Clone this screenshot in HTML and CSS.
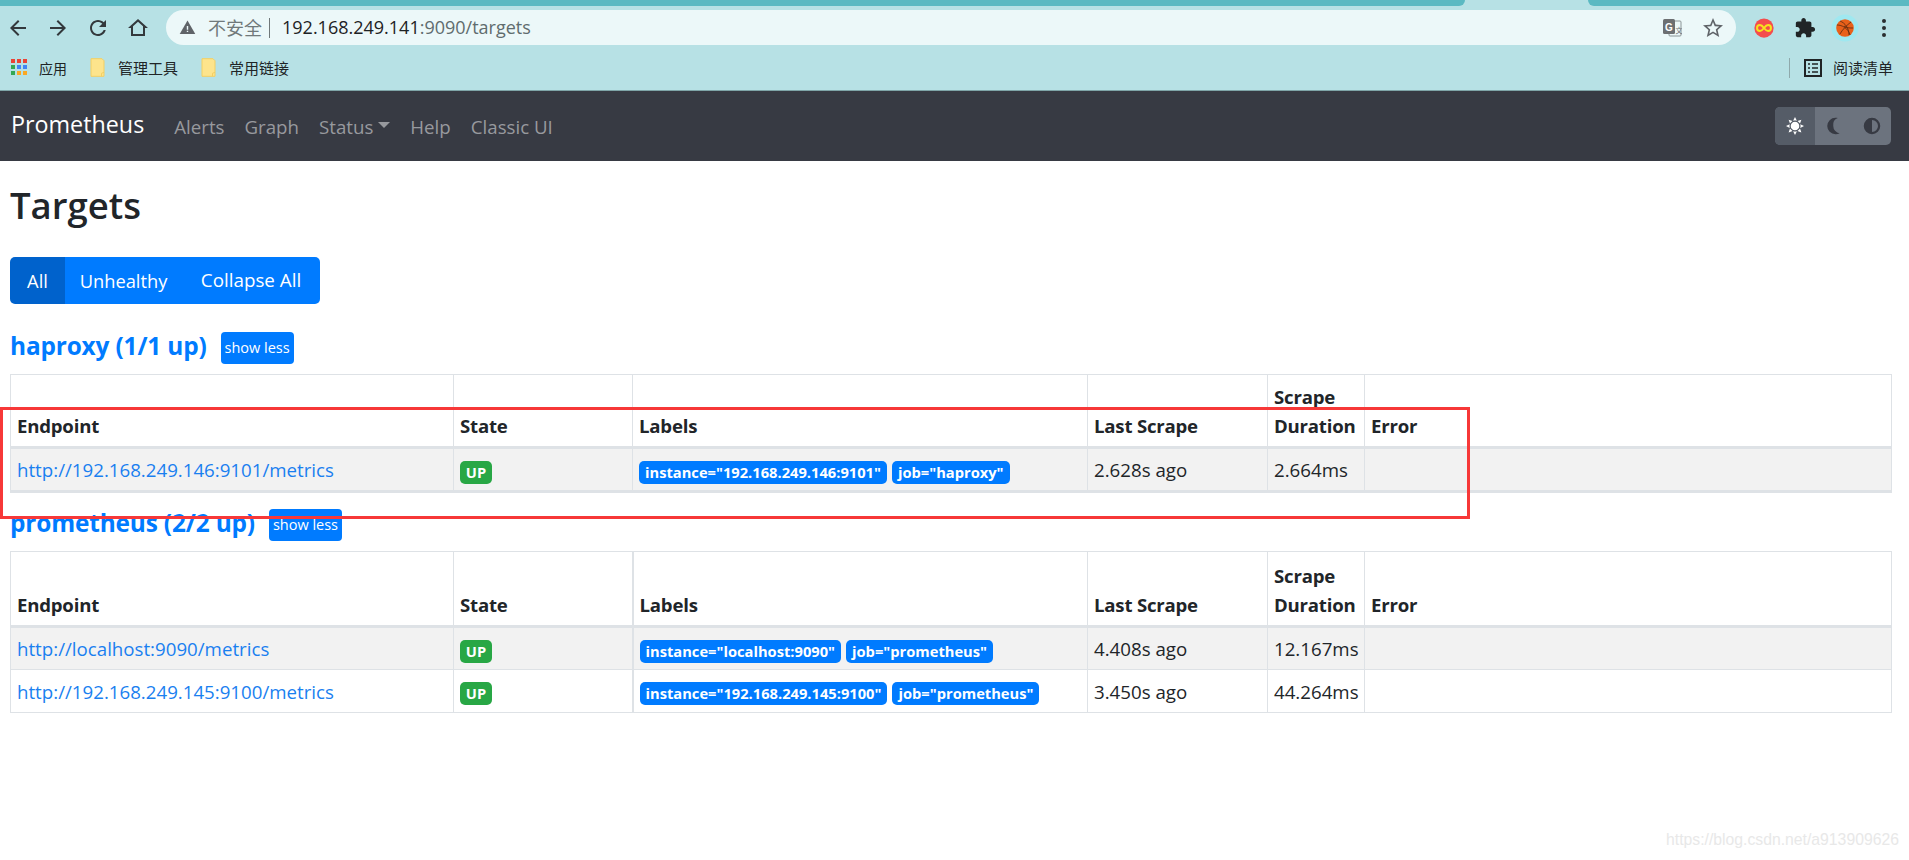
FILE: index.html
```html
<!DOCTYPE html>
<html lang="zh">
<head>
<meta charset="utf-8">
<title>Prometheus Time Series Collection and Processing Server</title>
<link rel="stylesheet" href="styles.css">
</head>
<body>
<header class="chrome">
  <div class="tabstrip"><div class="strip strip-left"></div><div class="strip strip-right"></div></div>
  <div class="toolbar">
    <div class="navicons">
      <svg class="ico" viewBox="0 0 24 24"><path d="M20 11H7.830l5.590-5.590L12 4l-8 8 8 8 1.410-1.410L7.830 13H20v-2z"/></svg>
      <svg class="ico" viewBox="0 0 24 24"><path d="M12 4l-1.410 1.410L16.170 11H4v2h12.170l-5.580 5.590L12 20l8-8z"/></svg>
      <svg class="ico" viewBox="0 0 24 24"><path d="M17.650 6.350C16.200 4.900 14.210 4 12 4c-4.420 0-7.990 3.580-7.990 8s3.570 8 7.990 8c3.730 0 6.840-2.550 7.730-6h-2.080c-.82 2.330-3.040 4-5.650 4-3.310 0-6-2.690-6-6s2.690-6 6-6c1.660 0 3.140.69 4.220 1.780L13 11h7V4l-2.350 2.350z"/></svg>
      <svg class="ico" viewBox="0 0 24 24"><path d="M12 5.690l5 4.500V18H7v-7.810l5-4.500M12 3L2 12h3v8h14v-8h3L12 3z"/></svg>
    </div>
    <div class="omnibox">
      <svg class="warn" viewBox="0 0 24 24"><path d="M1 21h22L12 2 1 21z"/><path class="warn-mark" d="M11 10h2v5h-2zM11 16.500h2v2h-2z"/></svg>
      <span class="insecure">不安全</span>
      <span class="sep"></span>
      <span class="url"><span class="host">192.168.249.141</span>:9090/targets</span>
      <span class="omni-right">
        <svg class="translate" viewBox="0 0 20 20"><rect class="tr-back" x="7" y="3" width="12" height="15" rx="1"/><rect class="tr-front" x="1" y="1" width="12" height="15" rx="1.500"/><text class="tr-g" x="7" y="12.500">G</text><text class="tr-x" x="13.500" y="15">文</text></svg>
        <svg class="star" viewBox="0 0 24 24"><path d="M22 9.240l-7.190-.62L12 2 9.190 8.630 2 9.240l5.460 4.730L5.820 21 12 17.270 18.180 21l-1.630-7.030L22 9.240zM12 15.400l-3.760 2.270 1-4.280-3.320-2.880 4.380-.38L12 6.100l1.710 4.040 4.380.38-3.320 2.880 1 4.280L12 15.400z"/></svg>
      </span>
    </div>
    <div class="extensions">
      <svg class="ext ext-first" viewBox="0 0 24 24"><circle class="ext-red" cx="12" cy="12" r="10.500"/><path class="ext-inf" d="M12 12c-1.800-2.400-3-3.200-4.400-3.200a3.200 3.200 0 0 0 0 6.400c1.400 0 2.600-.8 4.400-3.200s3-3.200 4.400-3.200a3.200 3.200 0 0 1 0 6.400c-1.400 0-2.600-.8-4.400-3.200z"/></svg>
      <svg class="ext" viewBox="0 0 24 24"><path d="M20.500 11H19V7c0-1.100-.9-2-2-2h-4V3.500C13 2.120 11.880 1 10.500 1S8 2.120 8 3.500V5H4c-1.100 0-1.990.9-1.990 2v3.800H3.500c1.490 0 2.700 1.210 2.700 2.700s-1.210 2.700-2.700 2.700H2V20c0 1.100.9 2 2 2h3.800v-1.500c0-1.490 1.210-2.700 2.700-2.700 1.490 0 2.700 1.210 2.700 2.700V22H17c1.100 0 2-.9 2-2v-4h1.500c1.380 0 2.500-1.120 2.500-2.500S21.880 11 20.500 11z"/></svg>
      <svg class="avatar" viewBox="0 0 28 28"><circle class="av-halo" cx="14" cy="14" r="13.500"/><circle class="av-ball" cx="14" cy="14" r="8.800"/><path class="av-line" d="M6 11c5 0 11 3 13 10M9 7c5 2 9 7 9 14M20 8c-4 3-9 8-11 12M22 14c-4 0-7 0-9-2"/></svg>
      <svg class="dots" viewBox="0 0 6 20"><circle cx="3" cy="3" r="2"/><circle cx="3" cy="10" r="2"/><circle cx="3" cy="17" r="2"/></svg>
    </div>
  </div>
  <div class="bookmarks">
    <div class="bm bm-apps">
      <svg class="apps" viewBox="0 0 17 17"><rect class="c-r" x="0" y="0" width="4" height="4"/><rect class="c-r" x="6" y="0" width="4" height="4"/><rect class="c-r" x="12" y="0" width="4" height="4"/><rect class="c-g" x="0" y="6" width="4" height="4"/><rect class="c-b" x="6" y="6" width="4" height="4"/><rect class="c-b" x="12" y="6" width="4" height="4"/><rect class="c-g" x="0" y="12" width="4" height="4"/><rect class="c-y" x="6" y="12" width="4" height="4"/><rect class="c-y" x="12" y="12" width="4" height="4"/></svg>
      <span>应用</span>
    </div>
    <div class="bm bm-folder">
      <svg class="folder" viewBox="0 0 15 19"><path class="f-body" d="M1 .7h11l2 2v15.600H1z"/><path class="f-fold" d="M11.500 18.300v-3l2.500-1"/></svg>
      <span>管理工具</span>
    </div>
    <div class="bm bm-folder">
      <svg class="folder" viewBox="0 0 15 19"><path class="f-body" d="M1 .7h11l2 2v15.600H1z"/><path class="f-fold" d="M11.500 18.300v-3l2.500-1"/></svg>
      <span>常用链接</span>
    </div>
    <div class="reading">
      <span class="reading-sep"></span>
      <svg class="reader" viewBox="0 0 18 18"><rect class="rd-box" x="1" y="1" width="16" height="16"/><path class="rd-lines" d="M4 5h2M8 5h6M4 9h2M8 9h6M4 13h2M8 13h6"/></svg>
      <span>阅读清单</span>
    </div>
  </div>
</header>

<nav class="navbar">
  <a class="brand">Prometheus</a>
  <ul class="navlinks">
    <li>Alerts</li>
    <li>Graph</li>
    <li class="dropdown">Status<span class="caret"></span></li>
    <li>Help</li>
    <li>Classic UI</li>
  </ul>
  <div class="theme">
    <span class="theme-btn active">
      <svg viewBox="0 0 24 24"><g class="sun-rays"><path d="M12 0l2.500 5h-5zM12 24l2.500-5h-5zM0 12l5-2.500v5zM24 12l-5-2.500v5zM3.500 3.500l5.300 1.800-3.500 3.500zM20.500 3.500l-1.800 5.300-3.500-3.500zM3.500 20.500l1.800-5.300 3.500 3.500zM20.500 20.500l-5.300-1.800 3.500-3.500z"/></g><circle class="sun-ring" cx="12" cy="12" r="6.500"/></svg>
    </span>
    <span class="theme-btn">
      <svg class="dim" viewBox="0 0 24 24"><path d="M14 23A11 11 0 1 1 14 1c1 0 2 .1 3 .4A10 10 0 0 0 11 12a10 10 0 0 0 8.500 9.800A11 11 0 0 1 14 23z"/></svg>
    </span>
    <span class="theme-btn">
      <svg class="dim" viewBox="0 0 24 24"><path d="M12 1a11 11 0 1 0 0 22 11 11 0 0 0 0-22zm0 19V4a8 8 0 0 1 0 16z"/></svg>
    </span>
  </div>
</nav>

<main class="page">
  <h1 class="title">Targets</h1>
  <div class="btn-group">
    <button class="btn active">All</button>
    <button class="btn">Unhealthy</button>
    <button class="btn">Collapse All</button>
  </div>

  <section class="pool pool-first">
    <div class="pool-head">
      <a class="pool-name">haproxy (1/1 up)</a>
      <button class="btn-sm">show less</button>
    </div>
    <table class="targets single">
      <colgroup><col class="c1"><col class="c2"><col class="c3"><col class="c4"><col class="c5"><col class="c6"></colgroup>
      <thead><tr><th>Endpoint</th><th>State</th><th>Labels</th><th>Last Scrape</th><th>Scrape Duration</th><th>Error</th></tr></thead>
      <tbody>
        <tr class="striped last-thick"><td><a class="link">http://192.168.249.146:9101/metrics</a></td><td><span class="badge up">UP</span></td><td class="labels"><span class="badge">instance="192.168.249.146:9101"</span><span class="badge">job="haproxy"</span></td><td>2.628s ago</td><td>2.664ms</td><td></td></tr>
      </tbody>
    </table>
  </section>

  <section class="pool">
    <div class="pool-head">
      <a class="pool-name">prometheus (2/2 up)</a>
      <button class="btn-sm">show less</button>
    </div>
    <table class="targets wide-rule">
      <colgroup><col class="c1"><col class="c2"><col class="c3"><col class="c4"><col class="c5"><col class="c6"></colgroup>
      <thead><tr><th>Endpoint</th><th>State</th><th>Labels</th><th>Last Scrape</th><th>Scrape Duration</th><th>Error</th></tr></thead>
      <tbody>
        <tr class="striped"><td><a class="link">http://localhost:9090/metrics</a></td><td><span class="badge up">UP</span></td><td class="labels"><span class="badge">instance="localhost:9090"</span><span class="badge">job="prometheus"</span></td><td>4.408s ago</td><td>12.167ms</td><td></td></tr>
        <tr><td><a class="link">http://192.168.249.145:9100/metrics</a></td><td><span class="badge up">UP</span></td><td class="labels"><span class="badge">instance="192.168.249.145:9100"</span><span class="badge">job="prometheus"</span></td><td>3.450s ago</td><td>44.264ms</td><td></td></tr>
      </tbody>
    </table>
  </section>
</main>

<div class="annotation"></div>
<div class="watermark">https://blog.csdn.net/a913909626</div>
</body>
</html>
```
FILE: styles.css
```css
* { box-sizing: border-box; }
html, body { margin: 0; height: 100%; }
body {
  position: relative;
  width: 1909px;
  height: 860px;
  overflow: hidden;
  background: #fff;
  color: #212529;
  font-family: "Open Sans", "Noto Sans CJK SC", sans-serif;
  font-size: 18.700px;
  line-height: 29px;
}

/* browser chrome */
.chrome { background: #b7e1e5; height: 91px; border-bottom: 1px solid #7fa5a8; }
.tabstrip { display: flex; height: 6px; }
.strip { background: #5bb9c2; height: 6px; }
.strip-left { width: 1465px; border-bottom-right-radius: 8px; }
.strip-right { margin-left: 123px; flex: 1; border-bottom-left-radius: 8px; }
.toolbar { display: flex; align-items: center; height: 35px; margin-top: 4px; }
.navicons { display: flex; align-items: center; gap: 16px; width: 166px; padding-left: 6px; }
.ico { width: 24px; height: 24px; fill: #33383c; display: block; }
.omnibox {
  width: 1570px; height: 35px; border-radius: 18px; background: #ecf8f9;
  display: flex; align-items: center; padding-left: 13px; color: #5f6c6e;
  font-size: 18px;
}
.warn { width: 17px; height: 17px; fill: #5f6368; margin-right: 12px; }
.warn-mark { fill: #ecf8f9; }
.insecure { font-family: "Noto Sans CJK SC", sans-serif; font-size: 18px; color: #70787a; }
.sep { width: 1px; height: 20px; background: #70787a; margin: 0 12px 0 7px; }
.host { color: #1d2224; }
.omni-right { margin-left: auto; display: flex; align-items: center; gap: 19px; padding-right: 11px; }
.translate { width: 20px; height: 20px; display: block; }
.tr-back { fill: #ecf8f9; stroke: #8a9496; stroke-width: 1; }
.tr-front { fill: #6c6f72; }
.tr-g { fill: #fff; font: bold 10px "Liberation Sans", sans-serif; text-anchor: middle; }
.tr-x { fill: #6c6f72; font: 7px "Noto Sans CJK SC", sans-serif; }
.star { width: 24px; height: 24px; fill: #5f6368; display: block; }
.extensions { display: flex; align-items: center; padding-left: 17px; }
.ext { width: 22px; height: 22px; fill: #202426; display: block; margin-right: 10px; }
.ext-first { margin-right: 19px; }
.ext-red { fill: #f44d4d; }
.ext-inf { fill: none; stroke: #f6e31c; stroke-width: 2.200; }
.avatar { width: 28px; height: 28px; display: block; margin-left: 5px; }
.av-halo { fill: #9fe8f0; }
.av-ball { fill: #e9601a; }
.av-line { fill: none; stroke: #5b2a10; stroke-width: .8; }
.dots { width: 6px; height: 20px; fill: #2a2e30; margin-left: 22px; display: block; }

.bookmarks {
  display: flex; align-items: center; height: 45px; padding-left: 11px; gap: 23px;
  font-family: "Noto Sans CJK SC", sans-serif; font-size: 15px; line-height: 20px; color: #202426;
}
.bm { display: flex; align-items: center; }
.apps { width: 17px; height: 17px; display: block; margin-right: 11px; }
.bm-apps span { font-size: 14px; }
.c-r { fill: #ea4335; }
.c-g { fill: #34a853; }
.c-b { fill: #4285f4; }
.c-y { fill: #f9a825; }
.folder { width: 15px; height: 19px; display: block; margin-right: 13px; }
.f-body { fill: #fde48c; stroke: #f3cf62; stroke-width: 1; }
.f-fold { fill: none; stroke: #f3cf62; stroke-width: 1; }
.reading { margin-left: auto; display: flex; align-items: center; padding-right: 16px; }
.reading-sep { width: 1px; height: 20px; background: #8fa9ac; margin-right: 14px; }
.reader { width: 18px; height: 18px; display: block; margin-right: 11px; }
.rd-box { fill: none; stroke: #202426; stroke-width: 2; }
.rd-lines { fill: none; stroke: #202426; stroke-width: 1.500; }

/* navbar */
.navbar {
  height: 70px; background: #373a43; display: flex; align-items: center;
  padding: 0 18px 0 11px;
}
.brand { color: #fff; font-size: 23.300px; margin-right: 30px; line-height: 30px; padding-bottom: 4px; }
.navlinks { display: flex; list-style: none; margin: 0; padding: 0; gap: 20px; color: #97999e; }
.dropdown { display: flex; align-items: center; }
.caret {
  width: 0; height: 0; margin-left: 5px; margin-bottom: 2px;
  border-top: 6px solid #97999e; border-left: 6px solid transparent; border-right: 6px solid transparent;
}
.theme { margin-left: auto; display: flex; height: 38px; border-radius: 5px; overflow: hidden; background: #6c737e; }
.theme-btn { width: 38px; display: flex; align-items: center; justify-content: center; }
.theme-btn.active { width: 40px; background: #555c67; }
.theme-btn svg { width: 18px; height: 18px; display: block; }
.sun-rays { fill: #fff; }
.sun-ring { fill: #fff; stroke: #555c67; stroke-width: 1.500; }
.dim { fill: #373a43; }

/* page */
.page { padding: 0 17px 0 10px; }
.title { margin: 0; padding-top: 15px; font-size: 36.500px; font-weight: 600; line-height: 58px; height: 96px; }
.btn-group { display: flex; width: 310px; height: 47px; border-radius: 5px; overflow: hidden; }
.btn {
  border: 0; background: #007bff; color: #fff; font: inherit; font-size: 18.300px; padding: 0; height: 47px;
}
.btn.active { background: #0062cc; }
.btn:nth-child(1) { width: 55px; }
.btn:nth-child(2) { width: 117px; }
.btn:nth-child(3) { flex: 1; font-size: 18.800px; }
.pool { margin-top: 16px; }
.pool-first { margin-top: 28px; }
.pool-head { display: flex; align-items: center; height: 32px; margin-bottom: 10px; gap: 14px; }
.pool-name { color: #007bff; font-size: 24.400px; font-weight: 700; line-height: 32px; padding-bottom: 4px; letter-spacing: -.15px; }
.btn-sm {
  width: 73px; height: 32px; border: 0; border-radius: 4px; padding: 0; background: #007bff; color: #fff;
  font: 14.500px/20px "Open Sans", sans-serif;
}
.targets { width: 1881px; table-layout: fixed; border-collapse: collapse; }
.c1 { width: 443px; } .c2 { width: 179px; } .c3 { width: 455px; }
.c4 { width: 180px; } .c5 { width: 97px; } .c6 { width: 527px; }
.targets th, .targets td { border: 1px solid #dee2e6; padding: 0 6px; }
.targets th {
  text-align: left; vertical-align: bottom; font-weight: 700; height: 75px; padding-bottom: 6px;
  border-bottom: 3px solid #dee2e6; font-size: 18.600px; letter-spacing: -.2px;
}
.single th { height: 73px; }
.targets td { height: 43px; vertical-align: middle; }
.single td { height: 44px; }
.striped td { background: #f2f2f2; }
.last-thick td { border-bottom: 3px solid #dee2e6; }
.link { color: #1a7ff0; }
.badge {
  display: inline-block; height: 23px; line-height: 22px; padding: 0 6px; border-radius: 5px;
  background: #007bff; color: #fff; font-size: 14.700px; font-weight: 700; vertical-align: middle; white-space: nowrap;
}
.badge.up { background: #28a745; width: 32px; text-align: center; padding: 0; }
.labels { white-space: nowrap; }
.labels .badge + .badge { margin-left: 5px; }
.wide-rule th:nth-child(3), .wide-rule td:nth-child(3) { border-left-width: 2px; }

/* overlays */
.annotation {
  position: absolute; left: 0; top: 407px; width: 1470px; height: 112px;
  border: 3px solid #f73838;
}
.watermark {
  position: absolute; left: 1666px; top: 828px; color: #e8e8e8;
  font: 15.750px/24px "Liberation Sans", sans-serif; white-space: nowrap;
}
```
